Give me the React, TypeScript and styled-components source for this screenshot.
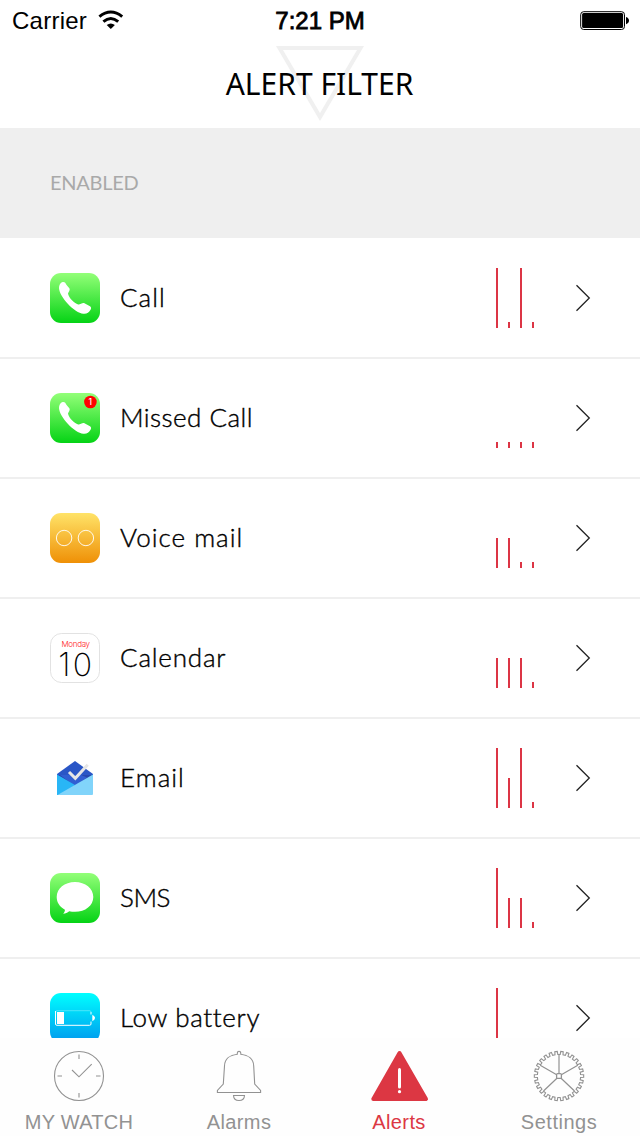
import React from 'react';
import styled, { createGlobalStyle } from 'styled-components';

type Alert = {
    name: string;
    icon: React.ReactNode;
    levels: number[];
    spacing: number;
};

const RED = '#dc3545';
const GREY = '#929292';

const GreenTile = ({ id }: { id: string }) => (
    <>
        <defs>
            <linearGradient id={id} x1="0" y1="0" x2="0" y2="1">
                <stop offset="0" stopColor="#93ff78" />
                <stop offset="1" stopColor="#05d315" />
            </linearGradient>
        </defs>
        <rect width="50" height="50" rx="11" fill={`url(#${id})`} />
    </>
);

const Handset = () => (
    <path
        d="M12.6 9C14.8 8.6 15.6 10 16.4 11.7L19.5 15.4C20.4 17.2 18.2 19 18 20.6C18.6 24.6 24 30.4 28.2 31.4C30.2 31.6 32 29.6 34 30L40 33.2C41.4 34.2 41.4 35.6 40.4 37C39 39.6 36.6 41.2 33.4 40.8C24.6 40 9.4 24 9 15C9 12.4 10.2 9.6 12.6 9Z"
        fill="#fff"
    />
);

const CallIcon = () => (
    <Glyph viewBox="0 0 50 50">
        <GreenTile id="call" />
        <Handset />
    </Glyph>
);

const MissedCallIcon = () => (
    <Glyph viewBox="0 0 50 50">
        <GreenTile id="missed" />
        <Handset />
        <circle cx="40.4" cy="9" r="6.3" fill="#ff0000" />
        <text x="40.2" y="12" fontSize="8.5" textAnchor="middle" fill="#fff" fontFamily="Inter, sans-serif" fontWeight="500">1</text>
    </Glyph>
);

const VoiceMailIcon = () => (
    <Glyph viewBox="0 0 50 50">
        <defs>
            <linearGradient id="voice" x1="0" y1="0" x2="0" y2="1">
                <stop offset="0" stopColor="#ffe368" />
                <stop offset="1" stopColor="#ef9006" />
            </linearGradient>
        </defs>
        <rect width="50" height="50" rx="11" fill="url(#voice)" />
        <g fill="none" stroke="#fff" strokeWidth="0.9">
            <circle cx="14.1" cy="25" r="7.7" />
            <circle cx="35.9" cy="25" r="7.7" />
        </g>
    </Glyph>
);

const CalendarIcon = () => (
    <Glyph viewBox="0 0 50 50">
        <rect x="0.5" y="0.5" width="49" height="49" rx="11" fill="#fff" stroke="#dadada" strokeWidth="0.8" />
        <text x="11.5" y="13.8" fontSize="8" textLength="28.5" fill="#ff1a1a" fontFamily="Inter, sans-serif" fontWeight="300">Monday</text>
        <text x="8.2" y="42.6" fontSize="32" textLength="34" fill="#000" fontFamily="Inter, sans-serif" fontWeight="200">10</text>
    </Glyph>
);

const EmailIcon = () => (
    <Glyph viewBox="0 0 50 50">
        <path d="M7 21L25 8L43 21V34H7Z" fill="#2a56c6" />
        <path d="M7 22H43L25 33.5Z" fill="#2548ae" />
        <path d="M10 22H31L37 24.5L25 33Z" fill="#315fd2" />
        <path d="M7 21.5L25 32L12 42H7Z" fill="#29b6f6" />
        <path d="M43 21.5V41Q43 42 42 42H7.5Z" fill="#81d4fa" />
        <path d="M19 19L25.3 25.3L37.7 11.8" fill="none" stroke="#e6e6e6" strokeWidth="3" />
    </Glyph>
);

const SmsIcon = () => (
    <Glyph viewBox="0 0 50 50">
        <GreenTile id="sms" />
        <path
            d="M25 9C35.4 9 43.3 15.4 43.3 24C43.3 32.6 35.4 38.8 25 38.8C23 38.8 21 38.7 19.2 38.2C17.4 39.8 15.5 40.7 13.2 40.7C14.4 39.5 15 38.2 14.9 36.7C9.8 34 6.7 29.4 6.7 24C6.7 15.4 14.6 9 25 9Z"
            fill="#fff"
        />
    </Glyph>
);

const BatteryIcon = () => (
    <Glyph viewBox="0 0 50 50">
        <defs>
            <linearGradient id="battery" x1="0" y1="0" x2="0" y2="1">
                <stop offset="0" stopColor="#00ffff" />
                <stop offset="1" stopColor="#0098ee" />
            </linearGradient>
        </defs>
        <rect width="50" height="50" rx="11" fill="url(#battery)" />
        <path d="M5.5 18V31Q5.5 32.3 7 32.3H39.5Q41 32.3 41 31V28.5M41 21.5V19" fill="none" stroke="#fff" />
        <path d="M5.5 19Q5.5 17.7 7 17.7H39.5Q41 17.7 41 19" fill="none" stroke="#fff" strokeOpacity="0.3" />
        <rect x="7" y="19" width="7" height="12" fill="#fff" />
        <path d="M42.3 21.7Q45 23 45 25Q45 27 42.3 28.3Z" fill="#fff" />
    </Glyph>
);

const alerts: Alert[] = [
    { name: 'Call', icon: <CallIcon />, levels: [60, 6, 60, 6], spacing: 1 },
    { name: 'Missed Call', icon: <MissedCallIcon />, levels: [6, 6, 6, 6], spacing: 0.45 },
    { name: 'Voice mail', icon: <VoiceMailIcon />, levels: [30, 30, 6, 6], spacing: 1 },
    { name: 'Calendar', icon: <CalendarIcon />, levels: [30, 30, 30, 6], spacing: 0.8 },
    { name: 'Email', icon: <EmailIcon />, levels: [60, 30, 60, 6], spacing: 1.05 },
    { name: 'SMS', icon: <SmsIcon />, levels: [60, 30, 30, 6], spacing: -0.5 },
    { name: 'Low battery', icon: <BatteryIcon />, levels: [60, 6, 6, 6], spacing: 0.65 },
];

// outline of the cog: each tooth is four points around the circle
const cogPath = (teeth: number, inner: number, outer: number) => {
    const step = (Math.PI * 2) / teeth;
    const points: string[] = [];
    for (let i = 0; i < teeth; i++) {
        const parts = [[-0.27, inner], [-0.21, outer], [0.21, outer], [0.27, inner]];
        parts.forEach(([shift, r]) => {
            const a = (i + 0.5 + shift) * step - Math.PI / 2;
            points.push(`${(30 + r * Math.cos(a)).toFixed(2)} ${(30 + r * Math.sin(a)).toFixed(2)}`);
        });
    }
    return `M${points.join('L')}Z`;
};

const WatchIcon = () => (
    <TabGlyph viewBox="0 0 60 60">
        <circle cx="30" cy="30" r="24.5" />
        <path d="M30 8.5V13M30 47V51.5M8.5 30H13M47 30H51.5M23 24L30 30.8L42.7 18.2" />
    </TabGlyph>
);

const BellIcon = () => (
    <TabGlyph viewBox="0 0 60 60">
        <path d="M28.3 8.3V7Q28.5 5.4 30 5.4Q31.6 5.4 31.8 7V8.3C39 9 44.5 13 44.7 20L45.7 38L51.6 44.4V46.5H8.4V44.4L14.3 38L15.5 20C15.7 13 21 9 28.3 8.3Z" />
        <path d="M24.5 49.5H35.5Q35.3 54.5 30 54.5Q24.7 54.5 24.5 49.5Z" />
    </TabGlyph>
);

const AlertIcon = () => (
    <TabGlyph viewBox="0 0 60 60">
        <path d="M30.5 7L57 53H4.3Z" fill="#dc3743" stroke="#dc3743" strokeWidth="4" strokeLinejoin="round" />
        <path d="M30.5 23.5V41" stroke="#fff" strokeWidth="3" strokeLinecap="round" />
        <circle cx="30.5" cy="45.7" r="1.6" fill="#fff" stroke="none" />
    </TabGlyph>
);

const SettingsIcon = () => (
    <TabGlyph viewBox="0 0 60 60">
        <path d={cogPath(26, 21.6, 24.7)} />
        <path d="M30 8.3V27.5M32.3 28.8L48.8 19.3M27.7 28.8L11.2 19.3M31.8 32L45.5 45M28.2 32L14.5 45" strokeWidth="1.2" />
        <rect x="27.6" y="27.6" width="4.8" height="4.8" rx="1" strokeWidth="1.3" />
    </TabGlyph>
);

const tabs = [
    { label: 'MY WATCH', icon: <WatchIcon />, active: false, spacing: 0.25 },
    { label: 'Alarms', icon: <BellIcon />, active: false, spacing: 0.4 },
    { label: 'Alerts', icon: <AlertIcon />, active: true, spacing: 0.4 },
    { label: 'Settings', icon: <SettingsIcon />, active: false, spacing: 0.5 },
];

const App = () => {
    return (
        <Screen>
            <GlobalStyle />
            <StatusBar>
                <Carrier>
                    <span>Carrier</span>
                    <svg width="26" height="20" viewBox="0 0 26 20">
                        <g fill="none" stroke="#000" strokeWidth="3">
                            <path d="M1.4 6.6Q12.8 -2.6 24.2 6.6" />
                            <path d="M5.4 11.6Q12.8 5.4 20.2 11.6" />
                        </g>
                        <path d="M8.7 15Q12.8 11.8 16.9 15L12.8 19Z" />
                    </svg>
                </Carrier>
                <Time>7:21 PM</Time>
                <Battery>
                    <svg width="50" height="20" viewBox="0 0 50 20">
                        <rect x="0.7" y="0.7" width="43.8" height="17.8" rx="3" fill="none" stroke="#000" />
                        <rect x="2.1" y="2.1" width="41" height="15" rx="1.5" />
                        <path d="M46 6Q49 7 49 9.6Q49 12.2 46 13.2Z" />
                    </svg>
                </Battery>
            </StatusBar>
            <Header>
                <Triangle viewBox="0 0 88 76">
                    <path d="M3.5 2H84.5L44 71Z" fill="none" stroke="#f0f0f0" strokeWidth="4" />
                </Triangle>
                <Title>ALERT FILTER</Title>
            </Header>
            <SectionTitle>ENABLED</SectionTitle>
            <List>
                {alerts.map((alert) => (
                    <Row key={alert.name}>
                        {alert.icon}
                        <Name $spacing={alert.spacing}>{alert.name}</Name>
                        <Levels>
                            {alert.levels.map((level, i) => (
                                <Level key={i} $height={level} />
                            ))}
                        </Levels>
                        <Chevron viewBox="0 0 16 28">
                            <path d="M1.5 1.2L14.3 14L1.5 26.8" />
                        </Chevron>
                    </Row>
                ))}
            </List>
            <TabBar>
                {tabs.map((tab) => (
                    <Tab key={tab.label} $active={tab.active} $spacing={tab.spacing}>
                        {tab.icon}
                        <span>{tab.label}</span>
                    </Tab>
                ))}
            </TabBar>
        </Screen>
    );
};

const GlobalStyle = createGlobalStyle`
    body{
        margin: 0;
        background: #fff;
    }

    *{
        box-sizing: border-box;
    }
`;

const Screen = styled.div`
    width: 640px;
    height: 1136px;
    display: flex;
    flex-direction: column;
    overflow: hidden;
    background: #fff;
    color: #000;
    font-family: Lato, sans-serif;
`;

const StatusBar = styled.div`
    height: 40px;
    flex: none;
    display: grid;
    grid-template-columns: 1fr auto 1fr;
    align-items: center;
    padding: 2px 10px 0 12px;
    font-family: "Liberation Sans", Arial, sans-serif;
    font-size: 24px;
    line-height: 38px;
`;

const Carrier = styled.div`
    display: flex;
    align-items: center;
    gap: 11px;
    letter-spacing: 0.25px;

    svg{
        margin-top: -2px;
    }
`;

const Time = styled.div`
    margin-right: 2px;
    -webkit-text-stroke: 0.8px #000;
`;

const Battery = styled.div`
    display: flex;
    justify-content: flex-end;
`;

const Header = styled.header`
    height: 88px;
    flex: none;
    display: grid;
    justify-items: center;

    >*{
        grid-area: 1 / 1;
    }
`;

const Triangle = styled.svg`
    width: 88px;
    height: 76px;
    margin-top: 6px;
`;

const Title = styled.h1`
    margin: 0 1px 0 0;
    font-family: "Noto Sans", sans-serif;
    font-size: 30px;
    font-weight: 400;
    line-height: 88px;
    white-space: nowrap;
`;

const SectionTitle = styled.h2`
    height: 110px;
    flex: none;
    margin: 0;
    padding-left: 50px;
    background: #efefef;
    color: #a9a9a9;
    font-size: 20px;
    font-weight: 400;
    letter-spacing: -0.25px;
    line-height: 108px;
`;

const List = styled.div`
    height: 800px;
    flex: none;
    padding-top: 1px;
    overflow: hidden;
`;

const Row = styled.div`
    height: 120px;
    display: flex;
    align-items: center;
    padding: 0 49px 0 50px;
    border-bottom: 2px solid #efefef;
`;

const Glyph = styled.svg`
    width: 50px;
    height: 50px;
    flex: none;
`;

const Name = styled.div<{ $spacing: number }>`
    flex: 1;
    margin: 0 0 2px 20px;
    font-size: 26px;
    font-weight: 300;
    letter-spacing: ${(props) => props.$spacing}px;
    white-space: nowrap;
    -webkit-text-stroke: 0.4px #000;
`;

const Levels = styled.div`
    height: 60px;
    display: flex;
    align-items: flex-end;
    gap: 10px;
    margin-right: 41px;
`;

const Level = styled.div<{ $height: number }>`
    width: 2px;
    height: ${(props) => props.$height}px;
    background: ${RED};
`;

const Chevron = styled.svg`
    width: 16px;
    height: 28px;
    flex: none;
    fill: none;
    stroke: #222;
    stroke-width: 1.3;
`;

const TabBar = styled.nav`
    height: 98px;
    flex: none;
    display: grid;
    grid-template-columns: repeat(4, 160px);
    margin-left: -1px;
    background: #fefefe;
`;

const TabGlyph = styled.svg`
    width: 60px;
    height: 60px;
    fill: none;
    stroke: ${GREY};
    stroke-width: 1.1;
`;

const Tab = styled.div<{ $active: boolean; $spacing: number }>`
    display: flex;
    flex-direction: column;
    align-items: center;
    padding-top: 8px;
    color: ${(props) => (props.$active ? '#dc3743' : GREY)};
    font-family: "Liberation Sans", Arial, sans-serif;
    font-size: 20px;
    letter-spacing: ${(props) => props.$spacing}px;

    span{
        margin-top: 4px;
        line-height: 24px;
    }
`;

export default App;
